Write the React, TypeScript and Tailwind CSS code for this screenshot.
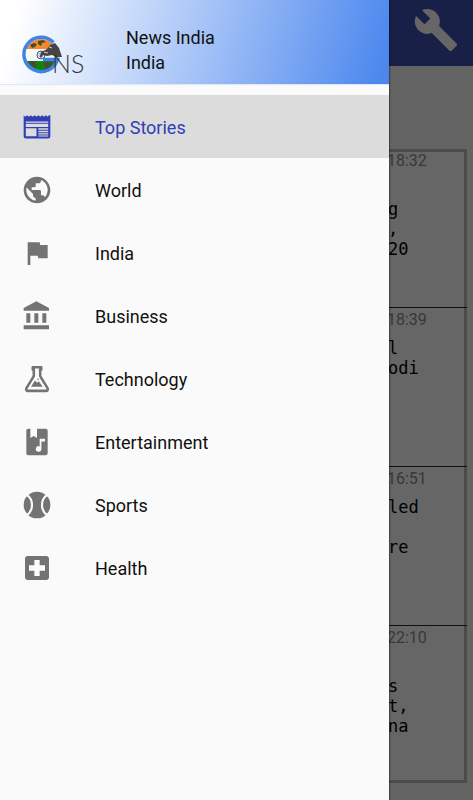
import type { ReactNode } from 'react';

function Icon({ children }: { children: ReactNode }) {
  return (
    <svg viewBox="0 0 24 24" className="size-8 shrink-0" fill="currentColor" aria-hidden="true">
      {children}
    </svg>
  );
}

const sections: { name: string; icon: ReactNode }[] = [
  {
    name: 'Top Stories',
    icon: (
      <path
        fillRule="evenodd"
        d="M2 3.2l1.2 1.2 1.4-1.2L6 4.4l1.4-1.2 1.4 1.2 1.4-1.2 1.4 1.2L13 3.2l1.4 1.2 1.4-1.2 1.4 1.2 1.4-1.2L20 4.4l1-1.2h1V19c0 1-.7 1.7-1.7 1.7H3.7C2.7 20.7 2 20 2 19zM3.6 7.8v1h16.8v-1zM3.6 9.6v2.4h16.8V9.6zM3.6 12.9V19h8V12.9zM13 12.9v1.2h7.4v-1.2zM13 14.9v1h7.4v-1zM13 16.7v1h7.4v-1zM13 18.4v.8h7.4v-.8z"
      />
    ),
  },
  {
    name: 'World',
    icon: (
      <path d="M12 2C6.48 2 2 6.48 2 12s4.48 10 10 10 10-4.48 10-10S17.52 2 12 2zm-1 17.93c-3.95-.49-7-3.85-7-7.93 0-.62.08-1.21.21-1.79L9 15v1c0 1.1.9 2 2 2v1.93zm6.9-2.54c-.26-.81-1-1.39-1.9-1.39h-1v-3c0-.55-.45-1-1-1H8v-2h2c.55 0 1-.45 1-1V7h2c1.1 0 2-.9 2-2v-.41c2.93 1.19 5 4.06 5 7.41 0 2.08-.8 3.97-2.1 5.39z" />
    ),
  },
  { name: 'India', icon: <path d="M14.4 6L14 4H5v17h2v-7h5.6l.4 2h7V6z" /> },
  {
    name: 'Business',
    icon: (
      <path d="M4 10v7h3v-7H4zm6 0v7h3v-7h-3zM2 22h19v-3H2v3zm14-12v7h3v-7h-3zM11.5 1L2 6v2h19V6l-9.5-5z" />
    ),
  },
  {
    name: 'Technology',
    icon: (
      <>
        <path
          d="M8.8 3.2h6.4v1.6h-.8v5l5.5 9c.6 1.1 0 2.1-1.1 2.1H5.2c-1.1 0-1.7-1-1.1-2.1l5.5-9v-5h-.8z"
          fill="none"
          stroke="currentColor"
          strokeWidth="1.9"
          strokeLinejoin="round"
        />
        <path d="M7.5 17.8l3-4.6 1.6 1.6 1.2-1.2 3 4.2z" />
        <circle cx="12.8" cy="12.2" r=".6" />
      </>
    ),
  },
  {
    name: 'Entertainment',
    icon: (
      <path
        fillRule="evenodd"
        d="M5.5 2H7v7l2.5-1.5L12 9V2h6.5c.8 0 1.5.7 1.5 1.5v17c0 .8-.7 1.5-1.5 1.5h-13C4.7 22 4 21.3 4 20.5v-17C4 2.7 4.7 2 5.5 2zM14 9.6v5.7a2.1 2.1 0 1 0 1.3 2v-5.7H18v-2z"
      />
    ),
  },
  {
    name: 'Sports',
    icon: (
      <>
        <circle cx="12" cy="12" r="10" />
        <path
          d="M4.2 4.2C9.6 8 9.6 16 4.2 19.8M19.8 4.2C14.4 8 14.4 16 19.8 19.8"
          fill="none"
          stroke="#fafafa"
          strokeWidth="1.6"
        />
      </>
    ),
  },
  {
    name: 'Health',
    icon: (
      <path d="M19 3H5c-1.1 0-2 .9-2 2v14c0 1.1.9 2 2 2h14c1.1 0 2-.9 2-2V5c0-1.1-.9-2-2-2zm-1 11h-4v4h-4v-4H6v-4h4V6h4v4h4v4z" />
    ),
  },
];

const stories = [
  { time: '18:32', lines: ['', 'g', ',', '20'] },
  { time: '18:39', lines: ['l', 'odi'] },
  { time: '16:51', lines: ['led', '', 're'] },
  { time: '22:10', lines: ['', 's', 't,', 'na'] },
];

function Logo() {
  return (
    <svg viewBox="0 0 64 44" className="h-11 w-16" role="img" aria-label="GNS">
      <defs>
        <clipPath id="globe">
          <circle cx="20" cy="22" r="16" />
        </clipPath>
      </defs>
      <g clipPath="url(#globe)">
        <path d="M2 4h36v13H2z" fill="#f18a2c" />
        <path d="M2 16h36v12H2z" fill="#f7f7f7" />
        <path d="M2 28h36v13H2z" fill="#128212" />
        <path
          d="M9 12l4-2 3 1-2 3-3 1zM17 8l5-1 3 2-4 1-1 3-3-2zM8 28l5 0 3 4-2 3-4-3zM23 29l9-1-4 8-4 1z"
          fill="#4a4a32"
        />
      </g>
      <circle cx="20" cy="22" r="4" fill="none" stroke="#3b55a5" strokeWidth="1" />
      <path d="M20 18v8M16 22h8M17 19l6 6M23 19l-6 6" stroke="#5267ad" strokeWidth=".5" />
      <path
        d="M32.5 9.5A17.200 17.200 0 1 0 36.6 26.500H22"
        fill="none"
        stroke="#3f83e8"
        strokeWidth="3.4"
      />
      <path d="M19 24l1-5 6-3 3-4 5-2 4 5 3 9-6 0-4-2-5 1-4-1-2 3z" fill="#454545" />
      <path d="M23 19l4 1M28 14l3 1" stroke="#d9d9d9" strokeWidth="1" />
      <text x="31" y="40" fontSize="25" fill="#333333" className="font-['Lato',sans-serif] font-light">
        NS
      </text>
    </svg>
  );
}

export default function App() {
  return (
    <div className="flex min-h-screen bg-[#646464] font-['Roboto',sans-serif]">
      <aside className="z-10 w-[389px] shrink-0 bg-[#fafafa] shadow-[0_0_2px_#000000]">
        <header className="flex h-[85px] items-end border-b border-[#dfe8f8] bg-[linear-gradient(105deg,#ffffff_5%,#4a86ee_99%)] pb-[7px] pl-[21px]">
          <Logo />
          <div className="mb-[2px] ml-[41px] text-lg leading-[25px] text-[#111111]">
            <p>News India</p>
            <p>India</p>
          </div>
        </header>
        <nav className="pt-[10px]" aria-label="Sections">
          {sections.map(({ name, icon }, i) => (
            <button
              key={name}
              type="button"
              aria-current={i === 0 ? 'page' : undefined}
              className={
                'flex h-[63px] w-full items-center gap-[42px] pl-[21px] text-left text-lg ' +
                (i === 0 ? 'bg-[#dcdcdc] text-[#303fb5]' : 'text-[#737373]')
              }
            >
              <Icon>{icon}</Icon>
              <span className={i === 0 ? 'pt-[2px]' : 'pt-[2px] text-[#111111]'}>{name}</span>
            </button>
          ))}
        </nav>
      </aside>

      <main className="min-w-0 flex-1 overflow-hidden">
        <div className="flex h-[66px] justify-end bg-[#192048] pt-[7px] pr-[14px]">
          <button type="button" aria-label="Settings" className="size-[46px] text-[#666666]">
            <svg viewBox="0 0 24 24" className="size-full" fill="currentColor" aria-hidden="true">
              <path d="M22.7 19l-9.1-9.1c.9-2.3.4-5-1.5-6.900-2-2-5-2.400-7.400-1.300L9 6 6 9 1.600 4.700C.4 7.100.9 10.100 2.900 12.100c1.900 1.900 4.600 2.400 6.900 1.500l9.100 9.100c.4.4 1 .4 1.400 0l2.300-2.300c.5-.4.5-1.100.1-1.400z" />
            </svg>
          </button>
        </div>
        <div className="mt-[83px] mr-[6px] -ml-1 bg-[#666666] pl-[2px] shadow-[inset_0_0_0_3px_#4b4b4b]">
          {stories.map(({ time, lines }) => (
            <article
              key={time}
              className="h-[159px] border-b border-[#111111] pt-[2px] last:h-[157px] last:border-0"
            >
              <time className="block text-base leading-5 text-[#383838]">{time}</time>
              <h2 className="mt-2 ml-px font-['DejaVu_Sans_Mono',monospace] text-[17px] leading-5 text-black">
                {lines.map((line, i) => (
                  <span key={i} className="block h-5">
                    {line}
                  </span>
                ))}
              </h2>
            </article>
          ))}
        </div>
      </main>
    </div>
  );
}
